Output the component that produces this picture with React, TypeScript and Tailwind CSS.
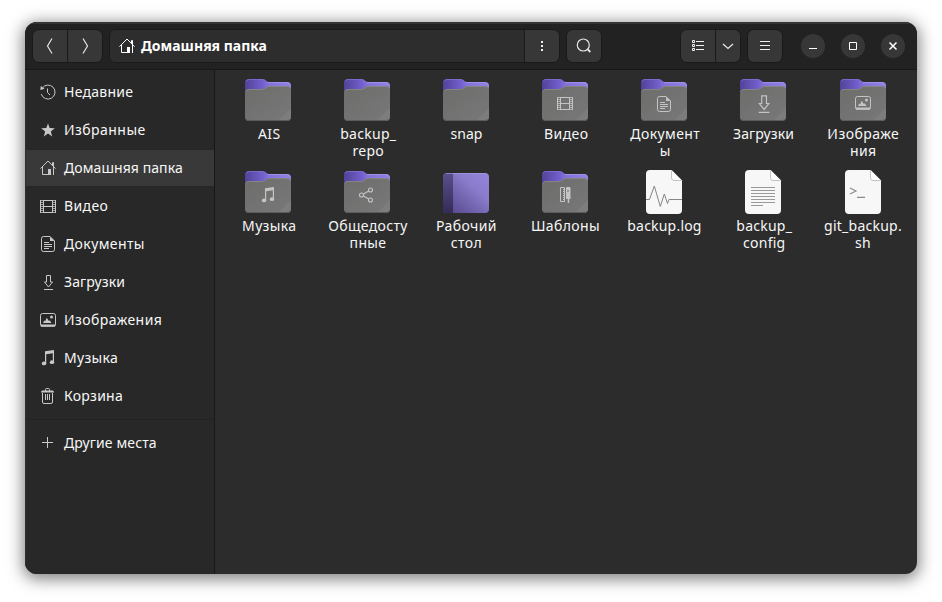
import type { ReactNode } from 'react';

type Glyph =
  | 'recent' | 'star' | 'home' | 'video' | 'doc' | 'download'
  | 'image' | 'music' | 'trash' | 'plus' | 'share' | 'template';

const glyphs: Record<Glyph, ReactNode> = {
  recent: (
    <g fill="none" stroke="currentColor">
      <path d="M2.2 4.2A7 7 0 1 1 1.3 10" />
      <path d="M7.5 4.500V8.500L10 11" />
      <path d="M.3 6 .8 2 4.600 4.800z" fill="currentColor" stroke="none" />
    </g>
  ),
  star: <path fill="currentColor" d="M8 1.4 9.7 6.1 14.8 6.3 10.8 9.4 12.2 14.5 8 11.5 3.8 14.5 5.2 9.4 1.2 6.3 6.3 6.1z" />,
  home: (
    <g fill="none" stroke="currentColor">
      <path d="M.5 8.6 8 1l7.5 7.6" />
      <path d="M2.5 7v7.5H8M13.5 7v8M12.5 5.5v-3h1v4" />
      <path d="M8 9h3v6H8z" fill="currentColor" stroke="none" />
    </g>
  ),
  video: (
    <g shapeRendering="crispEdges" stroke="currentColor">
      <path fill="none" d="M3.5 2.5h9v12h-9zM3.5 8.5h9" />
      <path d="M.5 2v13M15.5 2v13" />
      <path strokeDasharray="1 1" d="M1.500 2v13M2.500 2v13M13.500 2v13M14.500 2v13" strokeOpacity=".75" />
    </g>
  ),
  doc: (
    <g fill="none" stroke="currentColor">
      <path d="M3.5.5H10L14.5 5v8.5a2 2 0 0 1-2 2h-9a2 2 0 0 1-2-2v-11a2 2 0 0 1 2-2z" />
      <path d="M10 .5V5h4.5z" fill="currentColor" stroke="none" />
      <path d="M4 6.5h5M4 8.5h8M4 10.5h8M4 12.5h5" shapeRendering="crispEdges" />
    </g>
  ),
  download: (
    <g fill="none" stroke="currentColor">
      <path d="M6.5 1.5h4v6.5h2L8.5 13 4.5 8h2z" />
      <path d="M4 15.5h9" />
    </g>
  ),
  image: (
    <g fill="none" stroke="currentColor">
      <rect x=".5" y="1.5" width="15" height="12.5" rx="2" />
      <path d="M1 13h14v1.2H1z" fill="currentColor" />
      <path d="M3 11 4.2 8.5 5.2 9.3 6.8 5.7 8.8 9 9.8 8.3 11.5 11z" fill="currentColor" stroke="none" />
      <circle cx="11.5" cy="5" r="1.5" fill="currentColor" stroke="none" />
    </g>
  ),
  music: (
    <g fill="currentColor">
      <path d="M5 1.300 14 0v13h-1.200V3.200L6.200 4.200V14H5z" />
      <ellipse cx="4" cy="13.4" rx="2.2" ry="1.9" />
      <ellipse cx="12" cy="12.2" rx="2.2" ry="1.9" />
    </g>
  ),
  trash: (
    <g fill="none" stroke="currentColor">
      <path d="M5.5 3V1.5a1 1 0 0 1 1-1h2a1 1 0 0 1 1 1V3" />
      <path d="M1 4.5c0-1.5 1-2 2-2h9c1 0 2 .5 2 2z" fill="currentColor" stroke="none" />
      <path d="M2.5 5v9a1.5 1.5 0 0 0 1.5 1.5h7a1.5 1.5 0 0 0 1.5-1.5V5M5.5 6v6M7.5 6v6M9.5 6v6" />
    </g>
  ),
  plus: <path stroke="currentColor" d="M2 7.5h11M7.5 2v11" />,
  share: (
    <g fill="none" stroke="currentColor" strokeWidth="1.1">
      <circle cx="2.500" cy="8" r="2" />
      <circle cx="11.500" cy="3" r="2" />
      <circle cx="11.500" cy="13" r="2" />
      <path d="M4.500 7l5.200-3M4.500 9l5.200 3" />
    </g>
  ),
  template: (
    <g fill="none" stroke="currentColor">
      <path d="M3.5.5h4v14h-4z" />
      <path d="M6 2.500h1M6 4.500h1M6 6.500h1M6 8.500h1M6 10.500h1M6 12.500h1" />
      <path d="M9.500 0h3a1 1 0 0 1 1 1v11h-1.300v4h-1.500v-4H9V1z" fill="currentColor" stroke="none" />
      <path d="M11 3v2" stroke="#6f6f6f" />
    </g>
  ),
};

function Icon({ name }: { name: Glyph }) {
  return <svg className="size-4 shrink-0" viewBox="0 0 16 16">{glyphs[name]}</svg>;
}

type Kind = 'folder' | 'desktop' | 'log' | 'text' | 'script';

function Picture({ kind, glyph }: { kind: Kind; glyph?: Glyph }) {
  const big = glyph === 'download';
  return (
    <svg className="h-11 w-[47px] shrink-0 text-[#c4c4c4]" viewBox="0 0 47 44">
      {kind === 'folder' && (
        <>
          <path fill="url(#back)" d="M0 5a4 4 0 0 1 4-4h14c3 0 3 3 6 3h18a4 4 0 0 1 4 4v12H0z" />
          <path fill="none" stroke="#a393ea" strokeOpacity=".8" d="M23 4.500h19a3.500 3.500 0 0 1 3.500 3.500" />
          <path fill="none" stroke="#8573d6" strokeOpacity=".7" d="M1 3.500a3 3 0 0 1 3-2h14" />
          <path fill="url(#front)" d="M0 15a4 4 0 0 1 4-4h13.500c3 0 3.500-3 6.500-3H42a4 4 0 0 1 4 4v27a4 4 0 0 1-4 4H4a4 4 0 0 1-4-4z" />
          <path fill="none" stroke="#8a8986" strokeOpacity=".8" d="M1 13.500a3 3 0 0 1 3-2h13.500c3.500 0 3.500-3 6.500-3H42a3 3 0 0 1 3 2" />
          <path fill="#fff" fillOpacity=".05" d="M46 30v9a4 4 0 0 1-4 4H33z" />
          <path fill="none" stroke="#5c5c5c" d="M1.500 41.500a3.500 3.500 0 0 0 2.500 1h38a3.500 3.500 0 0 0 2.500-1" />
          {glyph && (
            <svg
              x={big ? 14 : 15}
              y={glyph === 'doc' ? 18 : big ? 16 : 17}
              width={big ? 19 : 16}
              height={big ? 19 : 16}
              viewBox="0 0 16 16"
            >
              {glyphs[glyph]}
            </svg>
          )}
        </>
      )}
      {kind === 'desktop' && (
        <>
          <rect y="3" width="46" height="40" rx="4" fill="url(#desk)" />
          <path fill="url(#dock)" d="M10 3H4a4 4 0 0 0-4 4v32a4 4 0 0 0 4 4h6z" />
          <path stroke="#a99ce6" strokeOpacity=".6" d="M3 3.500h40" />
        </>
      )}
      {(kind === 'log' || kind === 'text' || kind === 'script') && (
        <>
          <path fill="#f7f7f7" d="M9 0h21.500L41 10.500V40a4 4 0 0 1-4 4H9a4 4 0 0 1-4-4V4a4 4 0 0 1 4-4z" />
          <path fill="#fdfdfd" d="M30.500 0V8a2.500 2.500 0 0 0 2.500 2.500h8z" />
          <path fill="none" stroke="#bdbdbd" strokeWidth=".9" d="M30.500.500V8a2.500 2.500 0 0 0 2.500 2.500h7.500" />
          {kind === 'log' && <path fill="none" stroke="#858585" d="M5 29.500h3.500L13.300 16l6 20.500 4-12.500 3.200 9.500 1.500-4H41" />}
          {kind === 'text' && <path stroke="#999" d="M11 17.500h24M11 20.500h24M11 23.500h24M11 26.500h24M11 29.500h24M11 32.500h24M11 35.500h12" />}
          {kind === 'script' && <path fill="none" stroke="#8c8c8c" strokeWidth="1.200" d="M10 18l6 3-6 3M17 27.300h8" />}
        </>
      )}
    </svg>
  );
}

const places: { icon: Glyph; label: string; cls: string }[] = [
  { icon: 'recent', label: 'Недавние', cls: 'tracking-[0.25px]' },
  { icon: 'star', label: 'Избранные', cls: 'tracking-[0.45px]' },
  { icon: 'home', label: 'Домашняя папка', cls: 'tracking-[0.08px] bg-[#393939]' },
  { icon: 'video', label: 'Видео', cls: 'tracking-[0.4px]' },
  { icon: 'doc', label: 'Документы', cls: 'tracking-[0.4px]' },
  { icon: 'download', label: 'Загрузки', cls: 'tracking-[0.1px]' },
  { icon: 'image', label: 'Изображения', cls: 'tracking-[0.43px]' },
  { icon: 'music', label: 'Музыка', cls: 'tracking-[0.3px]' },
  { icon: 'trash', label: 'Корзина', cls: 'tracking-[0.25px]' },
];

const files: { kind: Kind; glyph?: Glyph; lines: string[]; cls: string }[] = [
  { kind: 'folder', lines: ['AIS'], cls: 'pl-[1.5px] tracking-[0.3px]' },
  { kind: 'folder', lines: ['backup_', 'repo'], cls: 'pl-[1.5px] tracking-[0.3px]' },
  { kind: 'folder', lines: ['snap'], cls: 'tracking-[0px]' },
  { kind: 'folder', glyph: 'video', lines: ['Видео'], cls: 'pl-[1.5px] tracking-[0.4px]' },
  { kind: 'folder', glyph: 'doc', lines: ['Документ', 'ы'], cls: 'pl-[1.5px] tracking-[0.4px]' },
  { kind: 'folder', glyph: 'download', lines: ['Загрузки'], cls: 'tracking-[0.1px]' },
  { kind: 'folder', glyph: 'image', lines: ['Изображе', 'ния'], cls: 'pl-[1.5px] tracking-[0.45px]' },
  { kind: 'folder', glyph: 'music', lines: ['Музыка'], cls: 'pl-[1.5px] tracking-[0.35px]' },
  { kind: 'folder', glyph: 'share', lines: ['Общедосту', 'пные'], cls: 'pl-px tracking-[0.35px]' },
  { kind: 'desktop', lines: ['Рабочий', 'стол'], cls: 'tracking-[0.4px]' },
  { kind: 'folder', glyph: 'template', lines: ['Шаблоны'], cls: 'tracking-[0.4px]' },
  { kind: 'log', lines: ['backup.log'], cls: 'tracking-[0.2px]' },
  { kind: 'text', lines: ['backup_', 'config'], cls: 'pl-[1.5px] tracking-[0.25px]' },
  { kind: 'script', lines: ['git_backup.', 'sh'], cls: 'pl-px tracking-[0.25px]' },
];

const box = 'flex h-[34px] overflow-hidden rounded-[7px] border border-[#1a1a1a] bg-[#373737]';
const cell = 'flex h-full items-center justify-center';

export default function App() {
  return (
    <div className="h-[602px] w-[942px] overflow-hidden bg-white pt-[22px] pl-[25px] font-['Noto_Sans','Open_Sans',sans-serif] text-[14px] text-[#f7f7f7]">
      <svg className="absolute size-0">
        <defs>
          <linearGradient id="back" x1="0" y1="0" x2="1" y2="0">
            <stop offset="0" stopColor="#514299" />
            <stop offset=".38" stopColor="#735fcb" />
            <stop offset=".5" stopColor="#8370da" />
            <stop offset="1" stopColor="#9383e2" />
          </linearGradient>
          <linearGradient id="front" x1="0" y1="0" x2="1" y2="1">
            <stop offset="0" stopColor="#6d6d6c" />
            <stop offset="1" stopColor="#787878" />
          </linearGradient>
          <linearGradient id="desk" x1="0" y1="1" x2="1" y2="0">
            <stop offset="0" stopColor="#4f4084" />
            <stop offset=".65" stopColor="#8a7bcb" />
            <stop offset="1" stopColor="#9586dc" />
          </linearGradient>
          <linearGradient id="dock" x1="0" y1="0" x2="0" y2="1">
            <stop offset="0" stopColor="#5b5089" />
            <stop offset="1" stopColor="#352b58" />
          </linearGradient>
        </defs>
      </svg>
      <div className="flex h-[552px] w-[892px] flex-col overflow-hidden rounded-[12px] bg-[#2c2c2c] shadow-[0_3px_16px_2px_rgba(0,0,0,0.5)]">
        <header className="flex h-12 shrink-0 items-center border-t-2 border-b border-t-[#353535] border-b-[#181818] bg-[#222] pb-px pl-[7px]">
          <div className={`${box} w-[71px]`}>
            <div className={`${cell} w-[35px] border-r border-[#1a1a1a]`}>
              <svg className="size-4" viewBox="0 0 16 16"><path fill="none" stroke="#e6e6e6" strokeWidth="1.200" d="M10 .5 5.500 8 10 15.500" /></svg>
            </div>
            <div className={`${cell} flex-1`}>
              <svg className="size-4" viewBox="0 0 16 16"><path fill="none" stroke="#e6e6e6" strokeWidth="1.200" d="M6 .5 10.500 8 6 15.500" /></svg>
            </div>
          </div>
          <div className={`${box} ml-1.5 w-[451px]`}>
            <div className="flex flex-1 items-center gap-1.5 border-r border-[#1a1a1a] bg-[#2d2d2d] pl-[9px] leading-4 font-bold text-white">
              <Icon name="home" />
              <span>Домашняя папка</span>
            </div>
            <div className={`${cell} w-[34px]`}>
              <svg className="size-4" viewBox="0 0 16 16" fill="#f2f2f2"><path d="M7 3h2v2H7zM7 7h2v2H7zM7 11h2v2H7z" /></svg>
            </div>
          </div>
          <div className={`${box} ml-1.5 w-9`}>
            <div className={`${cell} flex-1`}>
              <svg className="size-4" viewBox="0 0 16 16" fill="none" stroke="#e6e6e6"><circle cx="7.300" cy="7" r="6" strokeWidth="1.200" /><path strokeWidth="1.800" d="M11.500 11.200 14.300 14" /></svg>
            </div>
          </div>
          <div className={`${box} ml-[78px] w-[61px]`}>
            <div className={`${cell} w-[35px] border-r border-[#1a1a1a]`}>
              <svg className="size-4" viewBox="0 0 16 16" fill="none" stroke="#f2f2f2"><path d="M2.500 2.500h2v2h-2zM2.500 6.500h2v2h-2zM2.500 10.500h2v2h-2zM6 3.500h8M6 7.500h8M6 11.500h8" /></svg>
            </div>
            <div className={`${cell} flex-1`}>
              <svg className="size-4" viewBox="0 0 16 16"><path fill="none" stroke="#e6e6e6" strokeWidth="1.300" d="M3 6l5 4.500L13 6" /></svg>
            </div>
          </div>
          <div className={`${box} ml-1.5 w-9`}>
            <div className={`${cell} flex-1`}>
              <svg className="size-4" viewBox="0 0 16 16"><path stroke="#f2f2f2" d="M3 3.500h10M3 7.500h10M3 11.500h10" /></svg>
            </div>
          </div>
          <div className="ml-[18px] flex gap-4">
            {['M4 10.500h8', 'M4.500 4.500h7v7h-7z', 'M4.500 4.500l7 7M11.500 4.500l-7 7'].map((d, i) => (
              <div key={d} className="flex size-6 items-center justify-center rounded-full bg-[#373737]">
                <svg className="size-4" viewBox="0 0 16 16"><path fill="none" stroke="#fff" strokeWidth={i === 2 ? 1.5 : 1} d={d} /></svg>
              </div>
            ))}
          </div>
        </header>
        <div className="flex min-h-0 flex-1">
          <nav className="flex w-[190px] flex-col border-r border-l border-r-[#181818] border-l-[#303030] bg-[#282828] pt-1 leading-4">
            <div className="flex flex-col gap-0.5">
              {places.map((p) => (
                <div key={p.label} className={`flex h-9 items-center gap-2 pl-3.5 ${p.cls}`}>
                  <span className="flex text-[#c8c8c8]"><Icon name={p.icon} /></span>
                  <span>{p.label}</span>
                </div>
              ))}
            </div>
            <div className="mt-[5px] h-px bg-[#232323]" />
            <div className="mt-[5px] flex h-9 items-center gap-2 pl-3.5 tracking-[0.12px]">
              <span className="flex text-[#c8c8c8]"><Icon name="plus" /></span>
              <span>Другие места</span>
            </div>
          </nav>
          <main className="grid flex-1 auto-rows-[81px] grid-cols-[repeat(7,99px)] content-start gap-y-[11px] pt-2 pl-1 leading-[17px]">
            {files.map((f, i) => (
              <div key={i} className="flex flex-col items-center gap-[3px]">
                <div className={`flex ${i % 7 === 6 ? 'ml-0.5' : ''}`}><Picture kind={f.kind} glyph={f.glyph} /></div>
                <div className={`text-center ${f.cls}`}>
                  {f.lines.map((l) => <div key={l}>{l}</div>)}
                </div>
              </div>
            ))}
          </main>
        </div>
      </div>
    </div>
  );
}
